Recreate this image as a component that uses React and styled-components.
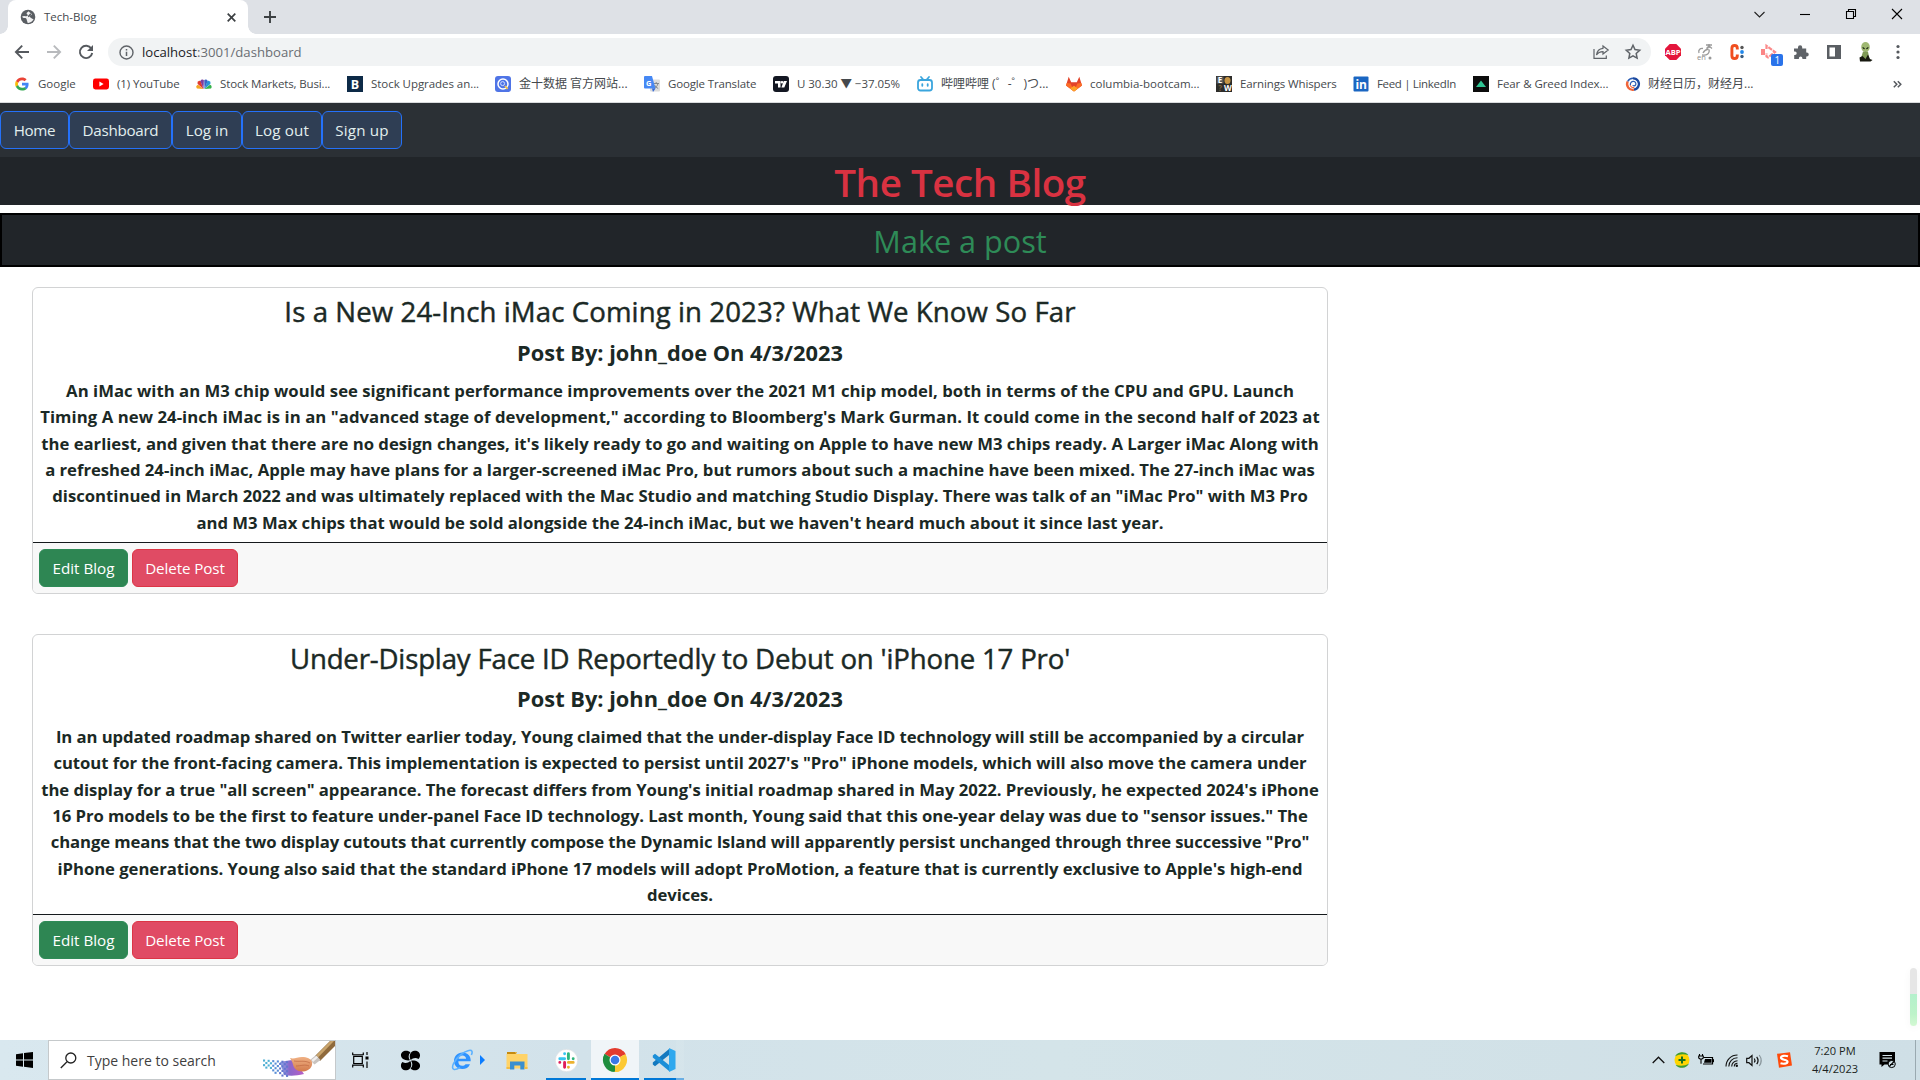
import React from "react";
import styled, { createGlobalStyle } from "styled-components";

const Global = createGlobalStyle`
  * { box-sizing: border-box; }
  html, body { margin: 0; padding: 0; background: #fff; overflow: hidden; }
  body { font-family: "Open Sans", "Noto Sans CJK SC", sans-serif; }
  svg { display: block; flex: none; overflow: visible; }
`;

const Desktop = styled.div`
  width: 1920px;
  height: 1080px;
  display: flex;
  flex-direction: column;
  overflow: hidden;
`;

/* ---------- browser chrome ---------- */
const TabStrip = styled.div`
  height: 34px;
  flex: none;
  display: flex;
  align-items: stretch;
  background: #dee1e6;
  padding: 0 12px 0 8px;
`;

const Tab = styled.div`
  position: relative;
  width: 240px;
  display: flex;
  align-items: center;
  padding: 0 12px 0 12px;
  border-radius: 8px 8px 0 0;
  background: #fff;
  &::before, &::after {
    content: "";
    position: absolute;
    bottom: 0;
    width: 8px;
    height: 8px;
  }
  &::before { left: -8px; background: radial-gradient(circle at 0 0, transparent 7.5px, #fff 8px); }
  &::after { right: -8px; background: radial-gradient(circle at 100% 0, transparent 7.5px, #fff 8px); }
`;

const TabTitle = styled.span`
  flex: 1;
  margin: 0 0 2px 8px;
  font-size: 11.5px;
  color: #45494d;
`;

const NewTab = styled.div`
  display: flex;
  align-items: center;
  margin-left: 16px;
`;

const WindowControls = styled.div`
  margin-left: auto;
  display: flex;
  align-items: center;
  gap: 34px;
  padding: 0 5px 6px 0;
`;

const Toolbar = styled.div`
  height: 36px;
  flex: none;
  display: flex;
  align-items: center;
  background: #fff;
  padding: 0 14px;
`;

const NavIcons = styled.div`
  width: 94px;
  display: flex;
  align-items: center;
  gap: 16px;
`;

const Omnibox = styled.div`
  width: 1544px;
  height: 28px;
  display: flex;
  align-items: center;
  padding: 0 10px 0 11px;
  border-radius: 14px;
  background: #f1f3f4;
`;

const Url = styled.span`
  flex: 1;
  margin-left: 8px;
  font-size: 13.15px;
  color: #6a6e73;
  b { font-weight: 400; color: #202124; }
`;

const OmniIcons = styled.div`
  display: flex;
  align-items: center;
  gap: 16px;
`;

const Extensions = styled.div`
  display: flex;
  align-items: center;
  gap: 16.2px;
  margin-left: 14px;
`;

const ExtSlot = styled.div`
  position: relative;
  width: 16px;
  height: 16px;
  display: flex;
  align-items: center;
  justify-content: center;
`;

const ExtBadge = styled.span`
  position: absolute;
  left: 10px;
  top: 10px;
  width: 12px;
  height: 12px;
  border-radius: 2px;
  background: #2a73ea;
  color: #fff;
  font: 10px/12px "Open Sans", sans-serif;
  text-align: center;
`;

const Bookmarks = styled.div`
  height: 33px;
  flex: none;
  display: flex;
  align-items: center;
  background: #fff;
  border-bottom: 1px solid #d9dbdd;
  padding: 0 18px 4px 14px;
`;

const Bookmark = styled.div`
  width: ${(p) => p.$w}px;
  display: flex;
  align-items: center;
  gap: 8px;
  white-space: nowrap;
  font-size: ${(p) => (p.$cjk ? 12 : 11.5)}px;
  line-height: 16px;
  letter-spacing: ${(p) => p.$ls || 0}px;
  color: #45494d;
`;

const BookmarkLabel = styled.span`
  margin-bottom: 1px;
`;

const Overflow = styled.span`
  margin-left: auto;
`;

/* ---------- blog page ---------- */
const Page = styled.main`
  position: relative;
  height: 937px;
  flex: none;
  background: #fff;
`;

const Navbar = styled.nav`
  height: 54px;
  display: flex;
  align-items: center;
  background: #2b3035;
`;

const NavButton = styled.button`
  width: ${(p) => p.$w}px;
  height: 38px;
  padding: 0;
  border: 1px solid #2471fa;
  border-radius: 6px;
  background: #2f3e54;
  color: #e2eeee;
  font: 15.2px/24px "Open Sans", sans-serif;
  letter-spacing: ${(p) => p.$ls || 0}px;
`;

const SiteTitle = styled.h1`
  height: 48px;
  margin: 0 0 8px;
  background: #212529;
  color: #d93241;
  text-align: center;
  font-size: 38.6px;
  font-weight: 600;
  line-height: 51px;
  letter-spacing: -0.45px;
`;

const MakePost = styled.div`
  height: 54px;
  border: 2px solid #000;
  background: #212529;
  color: #2e8b57;
  text-align: center;
  font-size: 30.6px;
  line-height: 52px;
`;

const Posts = styled.section`
  display: flex;
  flex-direction: column;
  gap: 40px;
  padding: 20px 32px;
`;

const Card = styled.article`
  width: 1296px;
  height: ${(p) => p.$h}px;
  display: flex;
  flex-direction: column;
  border: 1px solid #d2d3d4;
  border-radius: 6px;
  overflow: hidden;
  color: #1b2925;
  text-align: center;
`;

const CardBody = styled.div`
  flex: 1;
  padding-top: 6px;
`;

const PostTitle = styled.h3`
  margin: 0 0 10px;
  font-size: 27.6px;
  font-weight: 500;
  -webkit-text-stroke: 0.45px currentColor;
  line-height: 35px;
  letter-spacing: ${(p) => p.$ls}px;
`;

const Byline = styled.h5`
  margin: 0 0 12px;
  font-size: 21.8px;
  font-weight: 700;
  line-height: ${(p) => p.$lh}px;
`;

const Content = styled.p`
  margin: 0;
  font-size: 16.7px;
  font-weight: 700;
  line-height: 26.35px;
`;

const Line = styled.span`
  display: block;
  white-space: nowrap;
  letter-spacing: ${(p) => p.$ls}px;
`;

const CardFooter = styled.footer`
  height: 51px;
  flex: none;
  display: flex;
  align-items: center;
  gap: 4px;
  padding: 0 6px;
  border-top: 1px solid #15191c;
  background: #f8f8f8;
`;

const ActionButton = styled.button`
  width: ${(p) => (p.$danger ? 106 : 89)}px;
  height: 38px;
  padding: 0;
  border: 1px solid ${(p) => (p.$danger ? "#dc3545" : "#2e8b57")};
  border-radius: 6px;
  background: ${(p) => (p.$danger ? "#e04b64" : "#2e8653")};
  color: #fff;
  font: 15.2px/24px "Open Sans", sans-serif;
  letter-spacing: ${(p) => (p.$danger ? -0.1 : 0)}px;
`;

const ScrollWidget = styled.div`
  position: absolute;
  right: 3px;
  bottom: 14px;
  width: 7px;
  height: 58px;
  border-radius: 4px;
  background: linear-gradient(#e6e6e6 0 26px, #b4f0cc 26px, #bdf3c9 46px, #d3f8d3);
  box-shadow: 0 2px 8px rgba(0, 0, 0, 0.04);
`;

/* ---------- taskbar ---------- */
const Taskbar = styled.footer`
  height: 40px;
  flex: none;
  display: flex;
  background: linear-gradient(90deg, #d9e8ef, #d2e2ea 30%, #d4e4e9 55%, #cfdfe6);
`;

const TaskItem = styled.div`
  width: ${(p) => p.$w}px;
  display: flex;
  align-items: center;
  justify-content: center;
  gap: ${(p) => p.$gap || 0}px;
  padding-left: ${(p) => p.$pl || 0}px;
  margin-right: ${(p) => p.$mr || 0}px;
  background: ${(p) => (p.$active ? "#f0f5f8" : "transparent")};
  border-top: 2px solid transparent;
  border-bottom: 2px solid ${(p) => (p.$open ? "#0078d7" : "transparent")};
`;

const GroupEdge = styled.div`
  width: 8px;
  border-bottom: 2px solid #6aaee3;
  background: rgba(255, 255, 255, 0.08);
`;

const SearchBox = styled.div`
  width: 288px;
  display: flex;
  align-items: center;
  padding-left: 11px;
  border: 1px solid #c5c9cb;
  background: #fff;
  color: #3f3f3f;
  font-size: 14px;
`;

const SearchText = styled.span`
  flex: 1;
  margin-left: 10px;
`;

const Tray = styled.div`
  margin-left: auto;
  display: flex;
  align-items: center;
`;

const TrayItem = styled.div`
  width: ${(p) => p.$w}px;
  display: flex;
  justify-content: center;
`;

const Clock = styled.div`
  width: 62px;
  margin-bottom: 1px;
  text-align: center;
  font-size: 11.1px;
  line-height: 18px;
  color: #1b1f22;
`;

const ShowDesktop = styled.div`
  width: 5px;
  align-self: stretch;
  margin-left: 7px;
  border-left: 1px solid #9aa9b0;
`;

/* ---------- icon drawings ---------- */
const Svg = ({ w = 16, h, vb, children, ...rest }) => (
  <svg width={w} height={h || w} viewBox={vb || `0 0 ${w} ${h || w}`} fill="none" {...rest}>
    {children}
  </svg>
);

const Globe = () => (
  <Svg>
    <circle cx="8" cy="8" r="7.3" fill="#5a5e63" />
    <path d="M8.300 2.200c-.2 1.200-1.600 1-1.700 2.200 0 .9 1.300.8 1.200 1.800-.1.900-1.400.8-2.100 1.100L4 7l-1.900.5c.4 1.300 1.500 1.600 2.500 1.600 1.300 0 2.200.5 2.100 1.600 0 .9.700 1 .600 2.300-.1.700.3.900 1 .9 2.200-.200 4.500-1.700 5.300-4-.9.200-1.600-.1-2.100-.700-.6-.8-1.700-.6-2-1.600-.2-.9.700-1.300 1.500-1.300.600 0 .8-.6.700-1.200z" fill="#fff" opacity=".92" />
    <path d="M8 7.500c1.500-.5 1.600-2 3-2.500" stroke="#5a5e63" strokeWidth="1.500" />
  </Svg>
);

const GoogleG = () => (
  <Svg vb="-4 -4 56 56">
    <path fill="#EA4335" d="M24 10.500c3.500 0 6.700 1.200 9.200 3.600l6.900-6.900C35.900 3.200 30.500 1 24 1 14.600 1 6.500 6.400 2.600 14.200l8 6.200C12.500 14.700 17.700 10.500 24 10.500z" />
    <path fill="#4285F4" d="M47 24.600c0-1.600-.2-3.100-.4-4.600H24v9h12.900c-.6 3-2.300 5.500-4.800 7.200l7.700 6C44.400 38 47 31.800 47 24.600z" />
    <path fill="#FBBC05" d="M10.500 28.600c-.5-1.500-.8-3-.8-4.600s.3-3.100.8-4.600l-8-6.200C1 16.500 0 20.100 0 24s1 7.500 2.600 10.800z" />
    <path fill="#34A853" d="M24 47c6.500 0 12-2.100 15.900-5.800l-7.700-6c-2.200 1.500-4.900 2.300-8.200 2.300-6.300 0-11.500-4.200-13.500-9.900l-8 6.200C6.500 41.600 14.600 47 24 47z" />
  </Svg>
);

const YouTube = () => (
  <Svg><rect y="2.500" width="16" height="11" rx="2.400" fill="#f00" /><path d="M6.400 5.600v4.800L10.600 8z" fill="#fff" /></Svg>
);

const Peacock = () => (
  <Svg>
    <path d="M7.500 13 1 12.500A2.200 2.200 0 0 1 2 8.800z" fill="#f5a623" />
    <path d="M7.500 13 1.700 8A2.200 2.200 0 0 1 4.600 5z" fill="#e0392f" />
    <path d="M7.500 13 4.400 5.300a1.900 1.900 0 0 1 3.500-1z" fill="#7b3fa0" />
    <path d="M8.500 13 8.200 4.300a1.900 1.900 0 0 1 3.500 1z" fill="#3b62c4" />
    <path d="M8.500 13 11.400 5a2.200 2.200 0 0 1 2.900 3z" fill="#2a94d6" />
    <path d="M8.500 13 14 8.800a2.200 2.200 0 0 1 1 3.700z" fill="#35b34a" />
  </Svg>
);

const glyph = (x, y, size, text, fill = "#fff", weight = 700) => (
  <text x={x} y={y} fontSize={size} fontWeight={weight} fill={fill} textAnchor="middle" fontFamily="Open Sans, sans-serif">{text}</text>
);

const BSquare = () => <Svg><rect width="16" height="16" fill="#0d2a47" />{glyph(8, 12.5, 12.5, "B")}</Svg>;

const QSquare = () => (
  <Svg>
    <rect width="16" height="16" rx="3" fill="#4f74e6" />
    <circle cx="8" cy="8" r="5" stroke="#fff" strokeWidth="1.500" />
    <circle cx="7.600" cy="7.600" r="2" stroke="#cfdcff" strokeWidth="1" />
    <path d="m10 10 2.600 3" stroke="#f6c445" strokeWidth="1.800" />
  </Svg>
);

const TranslateIcon = () => (
  <Svg>
    <rect x="6" y="3.500" width="10" height="12" rx="1" fill="#dcdcdc" />
    <path d="M9.500 7.500H15M12.200 6v1.500M14 7.500c-.6 2.500-2 4-4 5M10.500 9c.8 1.600 2 2.700 3.700 3.500" stroke="#84898f" strokeWidth="1" />
    <path d="M1 0h7l3.500 12.500H1a1 1 0 0 1-1-1V1a1 1 0 0 1 1-1z" fill="#4688f4" />
    <path d="m8 12.500 3.500 0L9 16z" fill="#3367d6" />
    {glyph(4.7, 9.5, 7.5, "G")}
  </Svg>
);

const TradingView = () => (
  <Svg>
    <rect width="16" height="16" rx="3" fill="#131722" />
    <path d="M2 5h5.500v6.500H5V7.600H2zM10.800 5H14l-2.700 6.500H8.400z" fill="#fff" /><circle cx="9" cy="6.300" r="1.300" fill="#fff" />
  </Svg>
);

const Bilibili = () => (
  <Svg stroke="#3aa5dd" strokeWidth="1.800" strokeLinecap="round">
    <rect x="1" y="4" width="14" height="10.500" rx="2.500" /><path d="m4 1 2.200 2.500M12 1 9.800 3.500M5.300 8.200v1.600M10.700 8.200v1.600" />
  </Svg>
);

const GitLab = () => (
  <Svg>
    <path d="M8 15.500 0 9.500 2.700.700l2.500 5.500h5.600L13.300.700 16 9.500z" fill="#e24329" />
    <path d="M8 15.500 0 9.500l.8-2.600 3.800.7zM8 15.500l8-6-.8-2.600-3.800.7z" fill="#fc6d26" />
    <path d="m8 15.500-3.900-2.900L8 9.700l3.900 2.900z" fill="#fca326" />
  </Svg>
);

const Whispers = () => (
  <Svg>
    <rect width="16" height="16" fill="#2d2c2a" />
    <rect x=".5" y=".5" width="7" height="7" fill="#5b5a58" />
    <ellipse cx="11.500" cy="4.500" rx="3" ry="3.600" fill="#c79545" />
    {glyph(4, 7, 8, "E")}{glyph(4.2, 15, 8, "?", "#7b5e38")}{glyph(11.8, 15, 8, "W")}
  </Svg>
);

const LinkedIn = () => <Svg><rect x=".5" y=".5" width="15" height="15" rx="1" fill="#1a66c2" />{glyph(8, 12.8, 12, "in")}</Svg>;

const FearGreed = () => <Svg><rect width="16" height="16" fill="#0c0c0c" /><path d="M8 4.500 13 11H3z" fill="#2fc493" /></Svg>;

const Swirl = () => (
  <Svg w={14} vb="0 0 16 16" strokeWidth="2.600">
    <path d="M8 1.500A6.500 6.500 0 0 1 14 11c-1 2-3 3.300-5 3.500" stroke="#1d4aa0" />
    <path d="M9 14.500A6.500 6.500 0 0 1 2 5" stroke="#f0653a" /><path d="M2 5c1-2 3.300-3.400 6-3.500" stroke="#2b5cb3" strokeWidth="1.600" />
    <path d="M5 9.500C4.500 6.500 6.500 4.800 8.600 5c2.300.2 3.200 2.400 2.400 4-.8 1.500-2.800 1.500-3.300.3" stroke="#2b5cb3" strokeWidth="1.400" />
    <path d="M5 9.500c.5 2 2.500 3 4.500 2.500" stroke="#f0653a" strokeWidth="1.300" />
  </Svg>
);

const Windows = () => (
  <Svg w={17} h={16}><path d="M0 2.300 7 1.300v6.300H0zM8 1.100 17 0v7.600H8zM0 8.500h7v6.300l-7-1zM8 8.500h9V16l-9-1.200z" fill="#000" /></Svg>
);

const Magnifier = () => (
  <Svg w={17} stroke="#222" strokeWidth="1.300"><circle cx="10.800" cy="6" r="5" /><path d="M7 9.800.8 16" /></Svg>
);

const Paintbrush = () => {
  const dots = [];
  for (let i = 0; i < 11; i++)
    for (let j = 0; j < 7; j++)
      if ((i + j) % 2 === 0 && j < 3 + i / 2) dots.push([i, j]);
  return (
    <Svg w={73} h={38} vb="2 0 73 38">
      <defs>
        <linearGradient id="paint"><stop offset="0" stopColor="#7f9de0" /><stop offset=".4" stopColor="#7d56c6" /><stop offset="1" stopColor="#b04cc0" /></linearGradient>
        <linearGradient id="bristle" x2="0" y2="1"><stop offset="0" stopColor="#f0b184" /><stop offset="1" stopColor="#d27a4c" /></linearGradient>
      </defs>
      <path d="M20 21c5-1 9-2 14-2l10 14c-8 2-14 2-20 1z" fill="url(#paint)" opacity=".9" />
      {dots.map(([i, j]) => (
        <rect key={`${i}-${j}`} x={3 + i * 2.3} y={18.5 + j * 2.3 + i * 0.15} width="2.100" height="2.100" fill={i < 4 ? "#4fb0d3" : i < 7 ? "#5a8ed6" : "#6377cf"} />
      ))}
      <path d="m55 15 15-15h5v5L60 20z" fill="#8f6a3c" /><path d="m56.500 14 14-14h3.500L58 16.500z" fill="#c9a46c" />
      <path d="m50 19 6-5 4.500 5-6 4.500z" fill="#c9c4c0" /><path d="m51.500 19 5-4 1.500 1.500-5 4.500z" fill="#f2efed" />
      <path d="M30 17c4 1.500 7-1 12-1 5 0 9 1.500 10 5 1 5-3 9-9 9.500-6 .3-9-3-10-7-.6-2.500-1.500-4-3-6.500z" fill="url(#bristle)" />
      <path d="M34 20c5 1 11-1 16 2M36 25c5 0 9-2 13 0" stroke="#b9603a" strokeWidth=".6" />
    </Svg>
  );
};

const TaskView = () => (
  <Svg w={17} h={16} stroke="#000" strokeWidth="1.200">
    <path d="M.7 3V.5M11.300 3V.5M.7 2.800h10.600M1.700 4.500h8.600v7H1.700zM.7 15.500v-2.300h10.600v2.300M15 0v3M15 9.500V16" /><path d="M13.500 4.500h3v3h-3z" fill="#000" stroke="none" />
  </Svg>
);

const Pinwheel = () => (
  <Svg w={21} vb="0 0 22 22">
    <g fill="#000">
      <path d="M10.400 10.800C5.500 11.500 1 9.200 1 5.500 1 2.700 3.300.7 6.300.7c2 0 3.600.7 4.600 1.900C8.600 4.800 8.500 8.200 10.400 10.800z" />
      <path d="M11.200 10.400C9 6 10.600 1 15.300.7c3.200-.2 5.700 2 5.700 4.900 0 1.600-.6 2.900-1.600 3.800-2.700-1.800-5.900-1.200-8.200 1z" />
      <path d="M11.600 11.200c4.900-.7 9.400 1.600 9.400 5.300 0 2.800-2.300 4.800-5.300 4.800-2 0-3.600-.7-4.600-1.900 2.300-2.200 2.400-5.600.5-8.200z" />
      <path d="M10.800 11.600c2.200 4.400.6 9.400-4.100 9.700C3.500 21.500 1 19.300 1 16.400c0-1.600.6-2.900 1.600-3.800 2.700 1.800 5.900 1.200 8.200-1z" />
    </g>
  </Svg>
);

const Explorer = () => (
  <Svg w={22} vb="0 0 22 22">
    <path d="M4.500 12.300h15.200c.4-5-3-8.800-8.200-8.800-5 0-8.500 3.700-8.500 8.600 0 4.700 3.500 8 8.300 8 3.500 0 6.300-1.500 7.700-4.800h-4.500c-.8 1-1.900 1.500-3.200 1.500-2.400 0-4-1.500-4-4.500zM7.500 9.800c.3-2 1.700-3.300 3.900-3.300s3.600 1.300 3.700 3.300z" fill="#2f93ff" fillRule="evenodd" />
    <path d="M2.800 20.300C-.5 19 3 11 10 5.500 15 1.500 20 .3 21 2.300c.4 1 .1 2.300-.6 3.700M2.800 20.300c1.500.5 3.800-.4 6.200-1.800" stroke="#5cb1ff" strokeWidth="1.600" />
  </Svg>
);

const Folder = () => (
  <Svg w={22} h={19}>
    <path d="M1 1h8l1.500 2.500H1z" fill="#c68a0f" /><path d="M.5 3h21v14.500H.5z" fill="#ffd368" />
    <path d="M10 3 11 1h-2z" fill="#e6a91c" /><path d="M4 18.500v-8h14.500v8h-4.200v-4h-6v4z" fill="#3a8fd0" />
    <path d="M.5 16h3.500v2H.5zM18.500 16h3v2h-3z" fill="#f3bd45" />
  </Svg>
);

const Slack = () => (
  <Svg w={23} vb="0 0 23 23">
    <circle cx="11.500" cy="11.500" r="11.200" fill="#fff" stroke="#d5dadd" strokeWidth=".6" />
    <g strokeWidth="2.900" strokeLinecap="round">
      <path d="M9.600 4.700h.01M4.800 9.700h4.800" stroke="#36c5f0" /><path d="M13.400 4.700v5M18.200 9.700h.01" stroke="#2eb67d" />
      <path d="M13.400 13.400h4.800M13.400 18.200h.01" stroke="#ecb22e" /><path d="M9.600 13.400v4.800M4.800 13.400h.01" stroke="#e01e5a" />
    </g>
  </Svg>
);

const Chrome = () => (
  <Svg w={24} vb="0 0 24 24">
    <path d="M12 12 1.600 6A12 12 0 0 1 22.400 6z" fill="#e33b2e" />
    <path d="M12 12 22.400 6A12 12 0 0 1 12 24z" fill="#fcc934" />
    <path d="M12 12v12A12 12 0 0 1 1.600 6z" fill="#1e8e3e" />
    <path d="M12 6.600h10.700A12 12 0 0 0 20 3.100H9z" fill="#e33b2e" /><path d="m7.300 14.700-5.500-9a12 12 0 0 0-1.700 5l4.500 7z" fill="#1e8e3e" />
    <path d="m16.700 14.700-5.300 9.300a12 12 0 0 0 5-.8l4-7z" fill="#fcc934" />
    <circle cx="12" cy="12" r="5.500" fill="#fff" /><circle cx="12" cy="12" r="4.300" fill="#3b78e7" />
  </Svg>
);

const VSCode = () => (
  <Svg w={24} vb="0 0 24 24">
    <path d="M17 1v6L3 18.300.8 16.500v-2z" fill="#1479bf" /><path d="M17 23v-6L3 5.700.8 7.500v2z" fill="#1b8fd8" />
    <path d="m17 0 6.500 3v18L17 24z" fill="#2fa8ee" />
  </Svg>
);

const bookmarks = [
  [GoogleG, "Google", 79, 0],
  [YouTube, "(1) YouTube", 103, -0.1],
  [Peacock, "Stock Markets, Busi...", 151, -0.14],
  [BSquare, "Stock Upgrades an...", 148, -0.05],
  [QSquare, "金十数据 官方网站...", 149, 0, true],
  [TranslateIcon, "Google Translate", 129, -0.15],
  [TradingView, "U 30.30 ▼ −37.05%", 144, -0.03],
  [Bilibili, "哔哩哔哩 (゜-゜)つ...", 149, 0, true],
  [GitLab, "columbia-bootcam...", 150, 0],
  [Whispers, "Earnings Whispers", 137, -0.13],
  [LinkedIn, "Feed | LinkedIn", 120, -0.33],
  [FearGreed, "Fear & Greed Index...", 153, -0.06],
  [Swirl, "财经日历，财经月...", 150, 0, true],
];

const nav = [["Home", 69, -0.35], ["Dashboard", 103, -0.29], ["Log in", 70, 0], ["Log out", 80, 0.1], ["Sign up", 80, 0.15]];

const posts = [
  {
    title: "Is a New 24-Inch iMac Coming in 2023? What We Know So Far",
    ls: 0.1,
    height: 307,
    bylineHeight: 27,
    lines: [
      ["An iMac with an M3 chip would see significant performance improvements over the 2021 M1 chip model, both in terms of the CPU and GPU. Launch", 0.035],
      ["Timing A new 24-inch iMac is in an \"advanced stage of development,\" according to Bloomberg's Mark Gurman. It could come in the second half of 2023 at", 0.074],
      ["the earliest, and given that there are no design changes, it's likely ready to go and waiting on Apple to have new M3 chips ready. A Larger iMac Along with", 0.005],
      ["a refreshed 24-inch iMac, Apple may have plans for a larger-screened iMac Pro, but rumors about such a machine have been mixed. The 27-inch iMac was", -0.008],
      ["discontinued in March 2022 and was ultimately replaced with the Mac Studio and matching Studio Display. There was talk of an \"iMac Pro\" with M3 Pro", -0.004],
      ["and M3 Max chips that would be sold alongside the 24-inch iMac, but we haven't heard much about it since last year.", -0.018],
    ],
  },
  {
    title: "Under-Display Face ID Reportedly to Debut on 'iPhone 17 Pro'",
    ls: -0.17,
    height: 332,
    bylineHeight: 26,
    lines: [
      ["In an updated roadmap shared on Twitter earlier today, Young claimed that the under-display Face ID technology will still be accompanied by a circular", -0.073],
      ["cutout for the front-facing camera. This implementation is expected to persist until 2027's \"Pro\" iPhone models, which will also move the camera under", -0.042],
      ["the display for a true \"all screen\" appearance. The forecast differs from Young's initial roadmap shared in May 2022. Previously, he expected 2024's iPhone", -0.034],
      ["16 Pro models to be the first to feature under-panel Face ID technology. Last month, Young said that this one-year delay was due to \"sensor issues.\" The", -0.041],
      ["change means that the two display cutouts that currently compose the Dynamic Island will apparently persist unchanged through three successive \"Pro\"", -0.105],
      ["iPhone generations. Young also said that the standard iPhone 17 models will adopt ProMotion, a feature that is currently exclusive to Apple's high-end", -0.042],
      ["devices.", -0.05],
    ],
  },
];

export default function App() {
  return (
    <Desktop>
      <Global />
      <TabStrip>
        <Tab>
          <Globe />
          <TabTitle>Tech-Blog</TabTitle>
          <Svg w={9} stroke="#3c4043" strokeWidth="1.700"><path d="m.7.7 7.600 7.600M8.300.7.700 8.300" /></Svg>
        </Tab>
        <NewTab><Svg w={12} stroke="#3c4043" strokeWidth="1.900"><path d="M6 0v12M0 6h12" /></Svg></NewTab>
        <WindowControls>
          <Svg w={11} stroke="#222" strokeWidth="1.100"><path d="m.5 3 5 5 5-5" /></Svg>
          <Svg w={12} stroke="#000" strokeWidth="1.100"><path d="M1 6.500h10" /></Svg>
          <Svg w={12} stroke="#000" strokeWidth="1.100"><path d="M1.500 3.500h7v7h-7zM3.500 3.500v-2h7v7h-2" /></Svg>
          <Svg w={12} stroke="#000" strokeWidth="1.100"><path d="m1 1 10 10M11 1 1 11" /></Svg>
        </WindowControls>
      </TabStrip>

      <Toolbar>
        <NavIcons>
          <Svg stroke="#55595e" strokeWidth="1.900"><path d="M15 8H2M8.200 1.700 1.900 8l6.300 6.300" /></Svg>
          <Svg stroke="#b8babd" strokeWidth="1.900"><path d="M1 8h13M7.800 1.700 14.100 8l-6.300 6.300" /></Svg>
          <Svg><path d="M13.300 4.500A6.200 6.200 0 1 0 14.200 9" stroke="#55595e" strokeWidth="1.900" /><path d="M15 1v6H9z" fill="#55595e" /></Svg>
        </NavIcons>
        <Omnibox>
          <Svg w={15}><circle cx="7.500" cy="7.500" r="6.500" stroke="#5f6368" strokeWidth="1.400" /><path d="M7.500 6.700v4.300M7.500 4v1.500" stroke="#5f6368" strokeWidth="1.500" /></Svg>
          <Url><b>localhost</b>:3001/dashboard</Url>
          <OmniIcons>
            <Svg stroke="#5f6368" strokeWidth="1.200"><path d="M1 5v9.400h12.300v-3M10 2l5.200 4L10 10V7.700c-3 0-5 1-6.500 3.300C4 7 6.300 4.600 10 4.300z" /></Svg>
            <Svg stroke="#5f6368" strokeWidth="1.500"><path d="m8 1.300 2 4.300 4.700.6-3.500 3.200.9 4.700L8 11.800l-4.100 2.300.9-4.700-3.500-3.200 4.700-.6z" /></Svg>
          </OmniIcons>
        </Omnibox>
        <Extensions>
          <ExtSlot><Svg><path d="M4.700 0h6.600L16 4.700v6.600L11.300 16H4.700L0 11.300V4.700z" fill="#e4163c" />{glyph(8, 10.8, 7.6, "ABP")}</Svg></ExtSlot>
          <ExtSlot>
            <Svg stroke="#9a9a9a" strokeWidth="1.300">
              <path d="M2 9c-1-3 1-5 4-4.500M5 11c5 1 8-2 7-5.500M6 9c1-2 3-3.500 5.500-4M9 1h6M12 0v4M9.500 4.500 12 2l3 2.500" /><circle cx="13" cy="14" r="1.500" fill="#999" stroke="none" />
              <g stroke="none">{glyph(4.5, 15.5, 7.5, "en", "#8d8d8d", 400)}</g>
            </Svg>
          </ExtSlot>
          <ExtSlot>
            <Svg><path d="M8.300 5.500V4.300C8.300 2.600 7.300 1.500 5.600 1.500S2.900 2.700 2.900 4.300v7.400c0 1.700 1 2.800 2.700 2.800s2.700-1.200 2.700-2.800v-1.200" stroke="#f04e1f" strokeWidth="2.900" />
              <circle cx="13" cy="3.500" r="1.700" fill="#555" /><circle cx="13" cy="8" r="1.900" fill="#2187ea" /><circle cx="13" cy="12.500" r="1.700" fill="#3b5b7c" /></Svg>
          </ExtSlot>
          <ExtSlot>
            <Svg><path d="M0 5h4v6H0z" fill="#fb8585" /><path d="M5.500 5V1.800L14 8l-7 5.500-1.500-1V9" stroke="#fb8a8a" strokeWidth="2.200" strokeDasharray="4.500 1" /></Svg>
            <ExtBadge>1</ExtBadge>
          </ExtSlot>
          <ExtSlot><Svg><path d="M1 4.500h4V3.300a2.100 2.100 0 0 1 4.200 0v1.200h4v4h.6a1.900 1.900 0 0 1 0 3.900h-.6V15H9.400v-.8a1.700 1.700 0 0 0-3.500 0v.8H1.200v-4h.8a1.700 1.700 0 0 0 0-3.400H1z" fill="#5f6368" /></Svg></ExtSlot>
          <ExtSlot><Svg><path d="M1 1h14v14H1zM3.500 3.500v9H9v-9z" fill="#5a5e63" fillRule="evenodd" /></Svg></ExtSlot>
          <ExtSlot>
            <Svg h={20}>
              <ellipse cx="7.500" cy="5" rx="4.300" ry="5" fill="#9fb872" /><path d="M5 9.500h5l1 6-3 3H4l-.5-4z" fill="#7f9a55" />
              <path d="M4.300 5.300c1.300-.2 2.200.5 2.700 1.800-1.300.2-2.400-.4-2.700-1.800zM10.700 5.300c-1.300-.2-2.200.5-2.700 1.800 1.300.2 2.400-.4 2.700-1.800z" fill="#222b16" />
              <path d="M1.500 15.500l3-1.500 3 3 2.500-4.500 2 4.500 2.500 1-2 1.500H2z" fill="#17190f" />
            </Svg>
          </ExtSlot>
          <ExtSlot><Svg><circle cx="8" cy="2.500" r="1.600" fill="#55595e" /><circle cx="8" cy="8" r="1.600" fill="#55595e" /><circle cx="8" cy="13.500" r="1.600" fill="#55595e" /></Svg></ExtSlot>
        </Extensions>
      </Toolbar>

      <Bookmarks>
        {bookmarks.map(([Icon, label, w, ls, cjk]) => (
          <Bookmark key={label} $w={w} $ls={ls} $cjk={cjk}><Icon /><BookmarkLabel>{label}</BookmarkLabel></Bookmark>
        ))}
        <Overflow><Svg w={9} h={6} stroke="#55595e" strokeWidth="1.500"><path d="m.8.2 3 3-3 3M4.800.2l3 3-3 3" /></Svg></Overflow>
      </Bookmarks>

      <Page>
        <Navbar>
          {nav.map(([label, w, ls]) => <NavButton key={label} $w={w} $ls={ls}>{label}</NavButton>)}
        </Navbar>
        <SiteTitle>The Tech Blog</SiteTitle>
        <MakePost>Make a post</MakePost>
        <Posts>
          {posts.map((post) => (
            <Card key={post.title} $h={post.height}>
              <CardBody>
                <PostTitle $ls={post.ls}>{post.title}</PostTitle>
                <Byline $lh={post.bylineHeight}>Post By: john_doe On 4/3/2023</Byline>
                <Content>
                  {post.lines.map(([text, ls]) => <Line key={text} $ls={ls}>{text}</Line>)}
                </Content>
              </CardBody>
              <CardFooter>
                <ActionButton>Edit Blog</ActionButton>
                <ActionButton $danger>Delete Post</ActionButton>
              </CardFooter>
            </Card>
          ))}
        </Posts>
        <ScrollWidget />
      </Page>

      <Taskbar>
        <TaskItem $w={48}><Windows /></TaskItem>
        <SearchBox><Magnifier /><SearchText>Type here to search</SearchText><Paintbrush /></SearchBox>
        <TaskItem $w={48}><TaskView /></TaskItem>
        <TaskItem $w={52}><Pinwheel /></TaskItem>
        <TaskItem $w={64} $gap={7}><Explorer /><Svg w={5} h={10}><path d="m0 0 5 5-5 5z" fill="#0a7cff" /></Svg></TaskItem>
        <TaskItem $w={34} $mr={12}><Folder /></TaskItem>
        <TaskItem $w={40} $mr={5} $open><Slack /></TaskItem>
        <TaskItem $w={48} $mr={5} $open $active><Chrome /></TaskItem>
        <TaskItem $w={32} $pl={8} $open><VSCode /></TaskItem>
        <GroupEdge />
        <Tray>
          <TrayItem $w={24}><Svg w={13} h={8} stroke="#111" strokeWidth="1.300"><path d="m.7 7 5.800-5.800L12.300 7" /></Svg></TrayItem>
          <TrayItem $w={24}>
            <Svg><circle cx="8" cy="8" r="7.500" fill="#ffd500" /><path d="M1 4.500A8 8 0 0 1 14.500 3.300C10 1.600 5 2 1 4.500zM15 11.500A8 8 0 0 1 1.500 12.700c4.500 1.700 9.500 1.300 13.500-1.200z" fill="#3b9b37" /><path d="M8 4.500v7M4.500 8h7" stroke="#16701e" strokeWidth="2" /></Svg>
          </TrayItem>
          <TrayItem $w={24}>
            <Svg h={12} stroke="#000"><path d="M5.500 3.500h9v6.500H5" strokeWidth="1.200" /><path d="M7 5h6.500v3.700H6z" fill="#000" stroke="none" /><path d="M15.500 5.200v3" /><path d="M1.500 0v2M4.500 0v2M.7 2h4.600v2L4 5H2L.7 4zM3 5v4.700" strokeWidth="1.100" /></Svg>
          </TrayItem>
          <TrayItem $w={26}>
            <Svg w={13} stroke="#111" strokeWidth="1.100"><path d="M1 12.500C1 6 6 1 12.500 1M3.800 12.500c0-5 3.700-8.700 8.700-8.700M6.700 12.500c0-3.300 2.500-5.800 5.800-5.800M9.300 12.500c0-1.800 1.400-3.200 3.200-3.200" /><circle cx="11.800" cy="11.800" r="1.200" fill="#111" stroke="none" /></Svg>
          </TrayItem>
          <TrayItem $w={20}>
            <Svg h={13} stroke="#111" strokeWidth="1.200"><path d="M.7 4.300h2.200L6 1.500v10L2.900 8.700H.7zM8.300 4.500c.9 1.300.9 2.700 0 4M10.700 2.800c1.800 2.500 1.800 4.900 0 7.400" /><path d="M13.200 1c2.700 3.700 2.700 7.300 0 11" stroke="#8a979d" /></Svg>
          </TrayItem>
          <TrayItem $w={40}>
            <Svg><path d="m1 1.800 13-1.600 2 13.300-13 2.300z" fill="#ff4b0b" /><path d="M12 4.200C9 3.300 5 3.700 5 5.800c0 2.400 6.500 1.400 6.500 3.900 0 2-4 2.500-7 1.600" stroke="#fff" strokeWidth="2.200" /></Svg>
          </TrayItem>
          <Clock>7:20 PM<br />4/4/2023</Clock>
          <TrayItem $w={42}>
            <Svg w={17}><path d="M.5 0h15.500v12.500H5.500L2.500 15v-2.500h-2z" fill="#000" /><path d="M3.500 3.500h9.500M3.500 6.200h9.500M3.500 9h5" stroke="#d3e3e9" strokeWidth="1.200" /><circle cx="12.700" cy="12" r="3.600" fill="#cfe0e6" stroke="#000" strokeWidth="1" /><path d="m10.300 14.300 4.800-4.800M11 12.500h3.500" stroke="#000" strokeWidth="1.200" /></Svg>
          </TrayItem>
          <ShowDesktop />
        </Tray>
      </Taskbar>
    </Desktop>
  );
}
